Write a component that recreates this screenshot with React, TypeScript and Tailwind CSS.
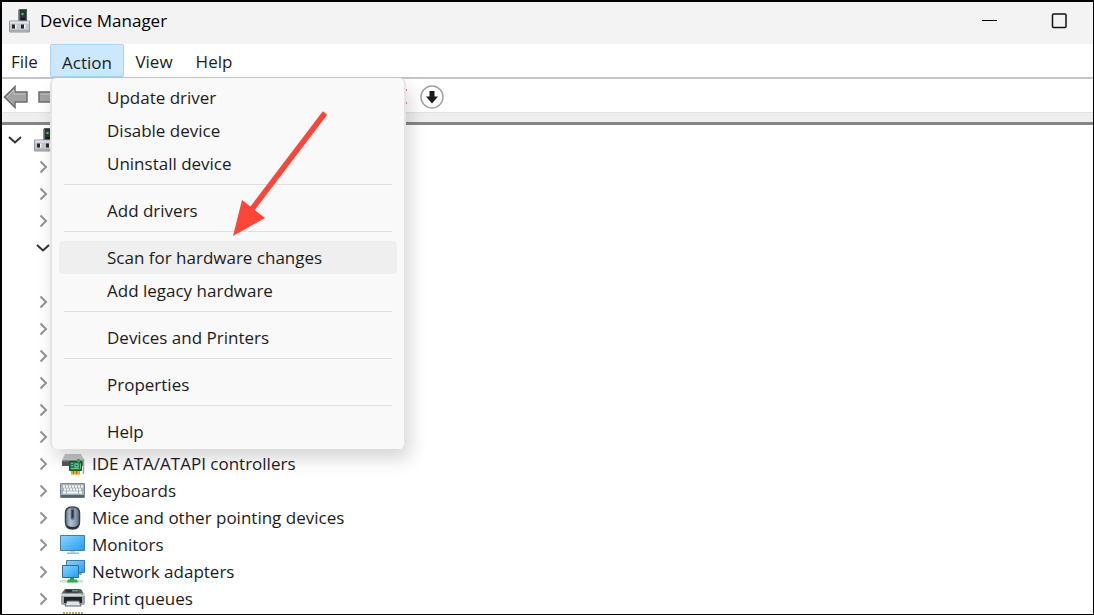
import { useState, type ReactNode } from 'react';

interface TreeRow {
  icon?: ReactNode;
  label?: string;
  open?: boolean;
  child?: boolean;
}

const ComputerIcon = () => (
  <svg width="22" height="24" viewBox="0 0 22 24">
    <path d="M9 1.5 10.5 0H18v14H9z" fill="#50565c" />
    <path d="M10.5 1H17v11h-6.500z" fill="#2d3338" />
    <path d="M9 1.500V14h1.500V1z" fill="#8b9095" />
    <circle cx="13.500" cy="5" r="1.300" fill="#35d03b" />
    <path d="M12 9h4v2h-4z" fill="#161a1d" />
    <path d="M.5 12h20v11H.5z" fill="#c3c6ca" stroke="#93979d" />
    <path d="M1 12.500h19v2H1z" fill="#e2e4e7" />
    <path d="M3 15.500h3v4H3zM12 15.500h3v4h-3z" fill="#25292e" />
    <path d="M6 15.500h1.500v4H6zM15 15.500h1.500v4H15z" fill="#f2f3f5" />
    <path d="M1 21h19v1.500H1z" fill="#a7abb1" />
  </svg>
);

const IdeIcon = () => (
  <svg width="26" height="22" viewBox="0 0 26 22">
    <path d="M5 1h16l3 6H2z" fill="#c2c4c6" />
    <path d="M2 7h21v6H2z" fill="#55585b" />
    <path d="M2 7h21v1.500H2z" fill="#8a8d90" />
    <path d="M23.500 6v15" stroke="#a8a8a8" strokeWidth="1.500" />
    <path d="M9.500 8.500h12v9h-12z" fill="#18864a" stroke="#0b5d31" />
    <path d="M17 6h3v3h-3z" fill="#3fae55" />
    <path d="M14.500 10.500h4v4h-4z" fill="#9fd4b1" />
    <path d="M15.500 11.500h2v2h-2z" fill="#1c6c40" />
    <path d="M11 10.500h2M11 12.500h2M11 15.500h8M20.500 10.500v5" stroke="#6ec58e" />
    <path d="M11 18h9v3.500h-9z" fill="#f5a31a" />
    <path d="M13.500 18v3.500M16.500 18v3.500" stroke="#c87a0c" />
  </svg>
);

const KeyboardIcon = () => (
  <svg width="26" height="22" viewBox="0 0 26 22">
    <path d="M.5 3.500h24v14H.5z" fill="#a9b2ba" stroke="#7c8893" />
    <path d="M3 6.500h20M4 9.500h18" stroke="#fff" strokeWidth="2" strokeDasharray="2 1" />
    <path d="M3 12.500h3M7 12.500h11M19 12.500h3" stroke="#fff" strokeWidth="2" />
    <path d="M1 15h23v2.500H1z" fill="#56636f" />
  </svg>
);

const MouseIcon = () => (
  <svg width="26" height="24" viewBox="0 0 26 24">
    <defs>
      <linearGradient id="mouse" x1="0" y1="0" x2="1" y2="0">
        <stop offset="0" stopColor="#66758a" />
        <stop offset="0.35" stopColor="#b3c3d8" />
        <stop offset="0.7" stopColor="#8c9db4" />
        <stop offset="1" stopColor="#56647a" />
      </linearGradient>
    </defs>
    <path
      d="M5.500 7Q5.500 1 12.500 1t7 6v9q0 7-7 7t-7-7z"
      fill="url(#mouse)"
      stroke="#3b4046"
      strokeWidth="1.500"
    />
    <path d="M6 18q2 3 6.500 3t6.500-3q-1 5-6.500 5T6 18z" fill="#2b2f34" />
    <path d="M10.500 1.500h4V13q-2 2-4 0z" fill="#66758a" />
    <path d="M11.500 4h2v8h-2z" fill="#30363e" />
  </svg>
);

const MonitorIcon = () => (
  <svg width="26" height="22" viewBox="0 0 26 22">
    <defs>
      <linearGradient id="screen" x1="0" y1="0" x2="1" y2="1">
        <stop offset="0" stopColor="#8ad6ff" />
        <stop offset="1" stopColor="#249cf0" />
      </linearGradient>
    </defs>
    <path d="M.5 1.500h24v15H.5z" fill="url(#screen)" stroke="#487da6" />
    <path d="M10 17h5v1.500h-5z" fill="#c4d0da" />
    <path d="M7 18.500h12v1.500H7z" fill="#a0b4c6" />
  </svg>
);

const NetworkIcon = () => (
  <svg width="26" height="24" viewBox="0 0 26 24">
    <path d="M6.500.5h18v12h-18z" fill="url(#screen)" stroke="#3f7dab" />
    <path d="M19 13h3v2h-3z" fill="#9aa8b3" />
    <path d="M2.500 5.500h16v12h-16z" fill="url(#screen)" stroke="#2f6c99" />
    <path d="M10 18h4v2h-4z" fill="#2d9a44" />
    <path d="M0 20h23v2.500H0z" fill="#cbe3cd" />
    <path d="M8 19.500h9l1 3H7z" fill="#2fae48" />
  </svg>
);

const PrinterIcon = () => (
  <svg width="26" height="22" viewBox="0 0 26 22">
    <path d="M5 1h16l3 5H1z" fill="#5c6166" />
    <path d="M6 1.500h12l1 3H5z" fill="#2b2f33" />
    <path d="M12 2h6v1.500h-6z" fill="#3cb878" />
    <path d="M1 6h24v9q0 2-2 2H3q-2 0-2-2z" fill="#9fa5ab" />
    <path d="M1 5.500h24V8H1z" fill="#d3d7da" />
    <path d="M4 9h18v6H4z" fill="#1f2327" />
    <path d="M21 5.500h2V7h-2z" fill="#2fdb4c" />
    <path d="M7 13h12l2 5H5z" fill="#dde4ea" stroke="#5f656b" />
  </svg>
);

const PartialIcon = () => (
  <svg width="26" height="27" viewBox="0 0 26 27">
    <path d="M3 1h20" stroke="#cda45a" strokeWidth="2" strokeDasharray="2 1" />
    <path d="M2 2h22v16H2z" fill="#e3bd68" />
  </svg>
);

const BackIcon = () => (
  <svg width="26" height="24" viewBox="0 0 26 24">
    <path d="M1.500 12 12 1.500V7h12v10H12v5.500z" fill="#a3a3a3" stroke="#6d6d6d" strokeWidth="1.500" />
    <path d="M4 12 11 5v4h11.500" fill="none" stroke="#c4c4c4" />
  </svg>
);

const ChevronRight = () => (
  <svg width="14" height="14" viewBox="0 0 14 14" fill="none" stroke="#939393" strokeWidth="2">
    <path d="M4.500 1.500 10 7l-5.500 5.500" />
  </svg>
);

const ChevronDown = () => (
  <svg width="14" height="14" viewBox="0 0 14 14" fill="none" stroke="#333" strokeWidth="2">
    <path d="M1 4l6 5.500L13 4" />
  </svg>
);

const menuGroups = [
  ['Update driver', 'Disable device', 'Uninstall device'],
  ['Add drivers'],
  ['Scan for hardware changes', 'Add legacy hardware'],
  ['Devices and Printers'],
  ['Properties'],
  ['Help'],
];

const rows: TreeRow[] = [
  {},
  {},
  {},
  { open: true },
  { child: true },
  {},
  {},
  {},
  {},
  {},
  {},
  { icon: <IdeIcon />, label: 'IDE ATA/ATAPI controllers' },
  { icon: <KeyboardIcon />, label: 'Keyboards' },
  { icon: <MouseIcon />, label: 'Mice and other pointing devices' },
  { icon: <MonitorIcon />, label: 'Monitors' },
  { icon: <NetworkIcon />, label: 'Network adapters' },
  { icon: <PrinterIcon />, label: 'Print queues' },
  { icon: <PartialIcon /> },
];

function ActionMenu({ active, onHover }: { active: string; onHover: (item: string) => void }) {
  return (
    <div
      role="menu"
      className="absolute left-0 top-[34px] z-10 w-[356px] rounded-md border-x-2 border-[#e4e4e4] bg-[#f9f9f9] pt-[3px] pb-px shadow-[4px_10px_18px_rgba(0,0,0,0.16)]"
    >
      {menuGroups.map((group, i) => (
        <div key={group[0]}>
          {i > 0 && <div className="mx-3 mt-1 mb-[9px] h-px bg-[#dedede]" />}
          {group.map((item) => (
            <button
              key={item}
              role="menuitem"
              onMouseEnter={() => onHover(item)}
              className={`mx-[7px] flex h-[33px] w-[338px] items-center rounded px-12 ${
                item === active ? 'bg-[#efefef]' : ''
              }`}
            >
              {item}
            </button>
          ))}
        </div>
      ))}
      {/* pointer to the scan entry */}
      <svg
        className="pointer-events-none absolute left-[178px] top-8"
        width="100"
        height="130"
        viewBox="0 0 100 130"
      >
        <path d="M95 3 22 99" stroke="#ff4438" strokeWidth="5.500" />
        <path d="M3 126 12 90l23 18z" fill="#ff4438" />
      </svg>
    </div>
  );
}

export default function App() {
  const [active, setActive] = useState('Scan for hardware changes');

  return (
    <div className="flex h-screen flex-col overflow-hidden border-t-2 border-r border-b border-l-2 border-black bg-white font-['Open_Sans','Noto_Sans',sans-serif] text-[17px] leading-6 text-[#1c1c1c]">
      <header className="flex h-[42px] shrink-0 items-center bg-[#f3f3f3] pb-1 pl-[7px]">
        <ComputerIcon />
        <h1 className="ml-[9px] flex-1 text-black">Device Manager</h1>
        <button aria-label="Minimize" className="flex h-full w-[69px] items-center justify-center">
          <svg width="16" height="16" viewBox="0 0 16 16">
            <path d="M0 7.500h15" stroke="#000" />
          </svg>
        </button>
        <button aria-label="Maximize" className="flex h-full w-[69px] items-center justify-center">
          <svg width="16" height="16" viewBox="0 0 16 16" fill="none">
            <rect x="1.500" y="1" width="13.500" height="13.500" rx="1" stroke="#111" strokeWidth="1.500" />
          </svg>
        </button>
      </header>

      <nav className="flex h-[35px] shrink-0 items-start border-b-2 border-[#c3c5c8]">
        <button className="h-9 w-12 pl-[9px] text-left">File</button>
        <div className="relative">
          <button className="h-[33px] w-[74px] rounded-xs border border-[#a5d5fb] bg-[#cce8ff] pt-1">
            Action
          </button>
          <ActionMenu active={active} onHover={setActive} />
        </div>
        <button className="h-9 w-[60px]">View</button>
        <button className="h-9 w-[60px]">Help</button>
      </nav>

      <div className="flex h-[33px] shrink-0 items-center pt-0.5 pl-[1px]">
        <button aria-label="Back">
          <BackIcon />
        </button>
        <button aria-label="Forward" className="ml-2 -scale-x-100">
          <BackIcon />
        </button>
        <div className="flex flex-1 items-center pl-[327px]">
          <button aria-label="Uninstall device">
            <svg width="18" height="18" viewBox="0 0 18 18">
              <path d="M1 1l15 15M16 1 1 16" stroke="#e0182d" strokeWidth="3" />
            </svg>
          </button>
          <button aria-label="Disable device" className="ml-3">
            <svg width="24" height="24" viewBox="0 0 24 24">
              <circle cx="12" cy="12" r="11" fill="#fff" stroke="#a2a2a2" strokeWidth="1.500" />
              <path d="M9.500 6h5v5.500H18l-6 7-6-7h3.500z" fill="#1c1c1c" />
            </svg>
          </button>
        </div>
      </div>
      <div className="h-[13px] shrink-0 border-t border-b-3 border-t-[#e2e2e2] border-b-[#858585] bg-[#efefef]" />

      <main className="min-h-0 flex-1 overflow-hidden pt-px">
        <div className="flex h-[27px] items-center pl-[6px]">
          <ChevronDown />
          <span className="ml-3">
            <ComputerIcon />
          </span>
        </div>
        <ul className="pl-[34px]">
          {rows.map((row, i) => (
            <li key={i} className="flex h-[27px] items-center">
              <span className="w-[14px]">
                {!row.child && (row.open ? <ChevronDown /> : <ChevronRight />)}
              </span>
              <span className="ml-[10px] w-[26px]">{row.icon}</span>
              <span className="ml-[6px]">{row.label}</span>
            </li>
          ))}
        </ul>
      </main>
    </div>
  );
}
